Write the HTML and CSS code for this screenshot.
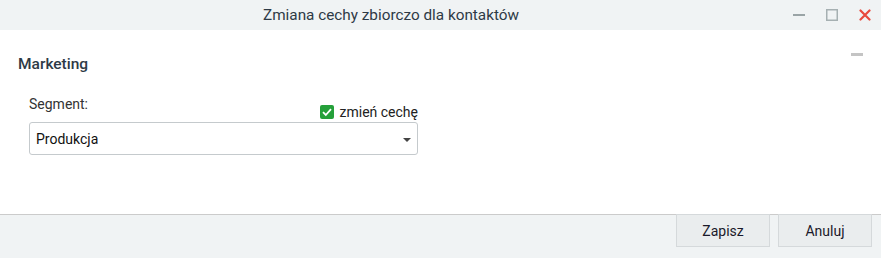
FILE: index.html
```html
<!DOCTYPE html>
<html lang="pl">
<head>
<meta charset="utf-8">
<link rel="stylesheet" href="styles.css">
</head>
<body>
<div class="dialog">
  <div class="titlebar">
    <div class="title">Zmiana cechy zbiorczo dla kontaktów</div>
    <div class="controls">
      <span class="ctl min"><svg width="12" height="12" viewBox="0 0 12 12"><rect x="0" y="5" width="12" height="2" fill="#9aa4a6"/></svg></span>
      <span class="ctl max"><svg width="12" height="12" viewBox="0 0 12 12"><rect x="0.75" y="0.75" width="10.5" height="10.5" fill="none" stroke="#a6b0b2" stroke-width="1.5"/></svg></span>
      <span class="ctl close"><svg width="12" height="12" viewBox="0 0 12 12"><path d="M1.5 1.5 L10.5 10.5 M10.5 1.5 L1.5 10.5" stroke="#e8493c" stroke-width="2.2" stroke-linecap="round"/></svg></span>
    </div>
  </div>
  <div class="content">
    <div class="section-head">
      <span class="section-title">Marketing</span>
      <span class="collapse"></span>
    </div>
    <div class="field">
      <div class="field-head">
        <span class="label">Segment:</span>
        <label class="check">
          <span class="box"><svg width="14" height="14" viewBox="0 0 14 14"><path d="M3 7.2 L5.8 10 L11 4.2" fill="none" stroke="#fff" stroke-width="1.8"/></svg></span>
          <span>zmień cechę</span>
        </label>
      </div>
      <div class="select">
        <span>Produkcja</span>
        <span class="arrow"></span>
      </div>
    </div>
  </div>
  <div class="footer">
    <button class="btn">Zapisz</button>
    <button class="btn">Anuluj</button>
  </div>
</div>
</body>
</html>
```
FILE: styles.css
```css
html, body {
  margin: 0;
  padding: 0;
  background: #fff;
}
body {
  font-family: Roboto, "Liberation Sans", sans-serif;
  font-size: 14px;
  color: #222;
}
.dialog {
  width: 881px;
  height: 258px;
  display: flex;
  flex-direction: column;
}
.titlebar {
  height: 30px;
  background: #f0f3f4;
  display: flex;
  align-items: center;
  flex-shrink: 0;
}
.title {
  flex: 1;
  text-align: center;
  font-size: 15.3px;
  color: #2e3a46;
  padding-left: 2px;
}
.controls {
  width: 101px;
  display: flex;
  align-items: center;
  padding-left: 13px;
  box-sizing: border-box;
  gap: 21px;
}
.ctl {
  display: flex;
  width: 12px;
  height: 12px;
}
.content {
  flex: 1;
  padding: 0 18px;
}
.section-head {
  display: flex;
  align-items: center;
  justify-content: space-between;
  height: 28px;
  margin-top: 20px;
}
.section-title {
  font-weight: 500;
  font-size: 15.5px;
  color: #2e3a46;
}
.collapse {
  width: 12px;
  height: 3px;
  background: #c4c4c4;
  align-self: flex-start;
  margin-top: 3px;
}
.field {
  margin-left: 11px;
  width: 389px;
  margin-top: 20px;
}
.field-head {
  display: flex;
  justify-content: space-between;
  align-items: flex-end;
  height: 20px;
  margin-bottom: 4px;
}
.label {
  color: #333;
  line-height: 17px;
  position: relative;
  top: -5px;
}
.check {
  display: flex;
  align-items: center;
  gap: 6px;
  color: #222;
  line-height: 16px;
  margin-bottom: -2px;
}
.box {
  width: 14px;
  height: 14px;
  background: #25a03a;
  border-radius: 2px;
  display: flex;
}
.select {
  height: 33px;
  border: 1px solid #c5cacd;
  border-radius: 3px;
  box-sizing: border-box;
  display: flex;
  align-items: center;
  justify-content: space-between;
  padding: 0 6px;
  color: #111;
}
.arrow {
  width: 0;
  height: 0;
  border-left: 4px solid transparent;
  border-right: 4px solid transparent;
  border-top: 4px solid #444;
  margin-top: 2px;
}
.footer {
  height: 44px;
  flex-shrink: 0;
  background: #f0f3f4;
  border-top: 1px solid #cbcbcb;
  display: flex;
  justify-content: flex-end;
  align-items: flex-start;
  gap: 8px;
  padding-right: 9px;
  box-sizing: border-box;
}
.btn {
  width: 94px;
  height: 33px;
  margin-top: -1px;
  background: #eaedee;
  border: 1px solid #d5d9db;
  font-family: Roboto, "Liberation Sans", sans-serif;
  font-size: 14px;
  color: #1a1a2a;
  padding: 0;
}
```
